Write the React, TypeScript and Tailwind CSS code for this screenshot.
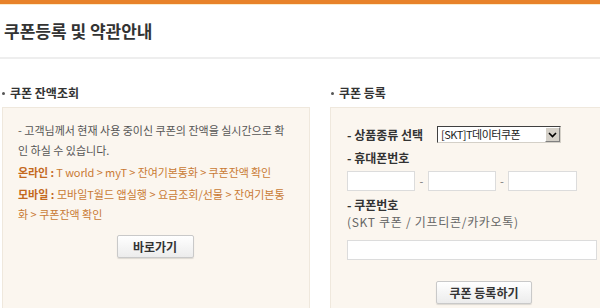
import React from "react";

const font = { fontFamily: '"Noto Sans CJK KR", "Noto Sans", sans-serif' };

function Btn({ label, w }: { label: string; w: string }) {
  return (
    <div
      className={`${w} h-[23px] flex items-center justify-center rounded-[2px] border border-[#c9c9c9] bg-gradient-to-b from-white to-[#ececec] text-[12px] font-bold text-[#333] shadow-[0_1px_1px_rgba(0,0,0,0.12)]`}
    >
      {label}
    </div>
  );
}

function Input({ w }: { w: string }) {
  return <div className={`${w} h-[20px] bg-white border border-[#dcdcdc]`} />;
}

export default function App() {
  return (
    <div className="w-[600px] h-[308px] overflow-hidden bg-white" style={font}>
      <div className="h-[4px] bg-[#e8822a]" />
      <div className="h-[1px] bg-[#fbeccc]" />
      <div className="h-[52px] flex items-center pl-[4px]">
        <h1 className="text-[17px] font-bold text-[#333] tracking-[0px]">쿠폰등록 및 약관안내</h1>
      </div>
      <div className="h-[2px] bg-[#eeeeee]" />
      <div className="flex">
        {/* left column */}
        <div className="w-[310px] flex flex-col">
          <div className="h-[48px] pt-[26px] pl-[2px] flex items-start">
            <div className="flex items-center h-[16px] text-[12px] font-bold text-[#333]">
              <span className="w-[3px] h-[3px] bg-[#555] rounded-full mr-[5px]" />
              쿠폰 잔액조회
            </div>
          </div>
          <div className="ml-[2px] h-[220px] bg-[#fbf6ef] border border-[#efe8dd] pl-[15px] pt-[12px] text-[11px] leading-[20px] text-[#555]">
            <p className="tracking-[0px] whitespace-nowrap">- 고객님께서 현재 사용 중이신 쿠폰의 잔액을 실시간으로 확</p>
            <p className="tracking-[0px]">인 하실 수 있습니다.</p>
            <p className="mt-[2px] tracking-[-0.1px] text-[#c97a34] whitespace-nowrap">
              <span className="font-bold text-[#c4691e]">온라인 :</span> T world &gt; myT &gt; 잔여기본통화 &gt; 쿠폰잔액 확인
            </p>
            <p className="mt-[2px] tracking-[0px] text-[#c97a34] whitespace-nowrap">
              <span className="font-bold text-[#c4691e]">모바일 :</span> 모바일T월드 앱실행 &gt; 요금조회/선물 &gt; 잔여기본통
            </p>
            <p className="tracking-[0px] text-[#c97a34]">화 &gt; 쿠폰잔액 확인</p>
            <div className="mt-[11px] flex justify-center pr-[17px]">
              <Btn label="바로가기" w="w-[77px]" />
            </div>
          </div>
        </div>
        {/* right column */}
        <div className="ml-[20px] flex-1 flex flex-col">
          <div className="h-[48px] pt-[26px] pl-[1px] flex items-start">
            <div className="flex items-center h-[16px] text-[12px] font-bold text-[#333]">
              <span className="w-[3px] h-[3px] bg-[#555] rounded-full mr-[5px]" />
              쿠폰 등록
            </div>
          </div>
          <div className="h-[220px] bg-[#fbf6ef] border border-[#efe8dd] border-r-0 pl-[16px] pt-[18px] text-[12px]">
            <div className="flex items-center h-[17px]">
              <span className="w-[90px] font-bold text-[#333]">- 상품종류 선택</span>
              <div className="w-[124px] h-[17px] bg-white border border-t-[#404040] border-l-[#404040] border-b-[#d4d0c8] border-r-[#d4d0c8] flex items-center">
                <span className="flex-1 pl-[3px] text-[11px] leading-none text-[#222] tracking-[-0.5px]">[SKT]T데이터쿠폰</span>
                <div className="w-[15px] h-[15px] bg-[#d4d0c8] border border-t-white border-l-white border-b-[#808080] border-r-[#808080] flex items-center justify-center">
                  <svg width="9" height="6" viewBox="0 0 9 6">
                    <path d="M1 1 L4.5 4.5 L8 1" fill="none" stroke="#000" strokeWidth="1.6" />
                  </svg>
                </div>
              </div>
            </div>
            <div className="mt-[6px] h-[18px] flex items-center font-bold text-[#333]">- 휴대폰번호</div>
            <div className="mt-[4px] flex items-center">
              <Input w="w-[68px]" />
              <span className="w-[13px] text-center text-[11px] text-[#777]">-</span>
              <Input w="w-[68px]" />
              <span className="w-[12px] text-center text-[11px] text-[#777]">-</span>
              <Input w="w-[69px]" />
            </div>
            <div className="mt-[5px] h-[18px] flex items-center font-bold text-[#333]">- 쿠폰번호</div>
            <div className="h-[16px] flex items-center text-[12px] text-[#666] tracking-[0.7px]">(SKT 쿠폰 / 기프티콘/카카오톡)</div>
            <div className="mt-[10px]">
              <Input w="w-[250px]" />
            </div>
            <div className="mt-[21px] ml-[89px]">
              <Btn label="쿠폰 등록하기" w="w-[96px]" />
            </div>
          </div>
        </div>
      </div>
    </div>
  );
}
